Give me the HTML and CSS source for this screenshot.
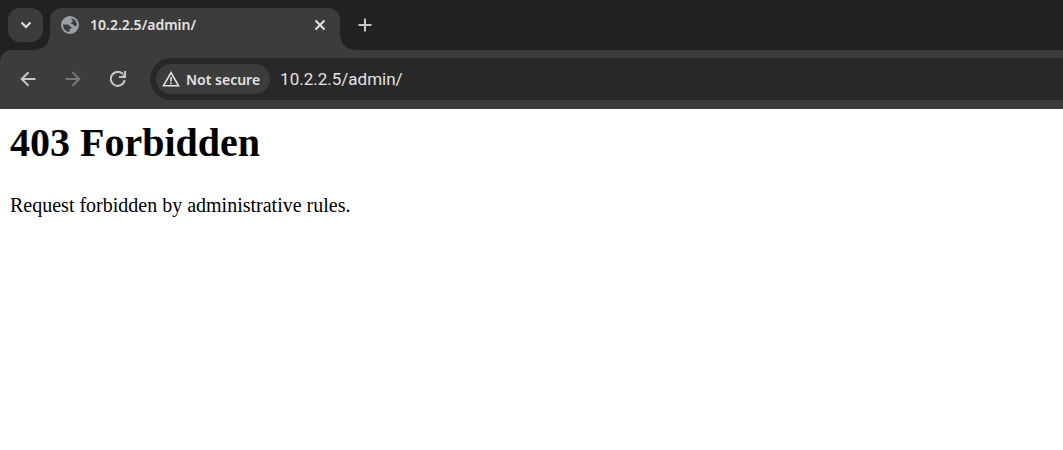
FILE: index.html
```html
<!DOCTYPE html>
<html lang="en">
<head>
  <meta charset="UTF-8" />
  <meta name="viewport" content="width=device-width, initial-scale=1.0"/>
  <title>10.2.2.5/admin/</title>
  <link rel="stylesheet" href="styles.css">
</head>
<body>
  <header class="browser">
    <div class="tab-strip">
      <button class="tab-search" aria-label="Search tabs">
        <svg width="12" height="8" viewBox="0 0 12 8"><path d="M1.500 1.500 6 6l4.500-4.500"/></svg>
      </button>
      <div class="tab">
        <svg class="globe" width="18" height="18" viewBox="0 0 18 18">
          <circle cx="9" cy="9" r="9"/>
          <path d="M10.500 2.200C13.500 3 15.800 5.500 16 8.700c-.6 1.300-1.500 1.500-2.700 1.300-.5-1.500-1.300-2-3.300-2V6.500c1.600 0 2-.8 1.600-1.800-.8-.4-1.300-1.200-1.100-2.500zM2 8.500h4.300c1.800 0 2.500.8 2.500 2.300h1.700v1.800c-1.300 0-2 .6-2 1.600v1.700C4.800 15.700 2 12.700 2 8.500z"/>
        </svg>
        <span class="tab-title">10.2.2.5/admin/</span>
        <button class="tab-close" aria-label="Close tab">
          <svg width="12" height="12" viewBox="0 0 12 12"><path d="m1.500 1.500 9 9m0-9-9 9"/></svg>
        </button>
      </div>
      <button class="new-tab" aria-label="New tab">
        <svg width="14" height="14" viewBox="0 0 14 14"><path d="M7 .5v13M.5 7h13"/></svg>
      </button>
    </div>

    <div class="toolbar">
      <nav class="nav-buttons" aria-label="Browser navigation">
        <button class="nav-button" aria-label="Back">
          <svg width="16" height="16" viewBox="0 0 16 16"><path d="M15.500 8H2M8.500 1.200 1.700 8l6.800 6.800"/></svg>
        </button>
        <button class="nav-button" aria-label="Forward" disabled>
          <svg width="16" height="16" viewBox="0 0 16 16"><path d="M.5 8H14M7.500 1.200 14.300 8l-6.800 6.800"/></svg>
        </button>
        <button class="nav-button" aria-label="Reload">
          <svg width="16" height="16" viewBox="0 0 16 16">
            <path d="M14.700 9A7 7 0 1 1 13 3.200"/>
            <path class="solid" d="M16 0v7H9V5h3.200l1.800-1.800V0z"/>
          </svg>
        </button>
      </nav>
      <div class="address-bar">
        <button class="security">
          <svg width="18" height="16" viewBox="0 0 18 16"><path d="M9 1.700 1.500 14.700h15zM9 6v4.500M9 11.500v1.700"/></svg>
          Not secure
        </button>
        <input class="address" type="text" aria-label="Address" value="10.2.2.5/admin/">
      </div>
    </div>
  </header>

  <main class="page">
    <h1>403 Forbidden</h1>
    <p>Request forbidden by administrative rules.</p>
  </main>
</body>
</html>
```
FILE: styles.css
```css
:root {
  --color-frame: #202221;
  --color-toolbar: #3c3c3c;
  --color-field: #282828;
  --color-icon: #c7c7c7;
  --color-text: #e3e3e3;
}

* {
  box-sizing: border-box;
}

body {
  margin: 0;
  background: #fff;
}

.browser {
  background: var(--color-frame);
  color: var(--color-text);
  font-family: "Noto Sans", "Open Sans", sans-serif;
}

button {
  display: flex;
  align-items: center;
  justify-content: center;
  padding: 0;
  border: none;
  background: none;
  color: inherit;
  font-family: inherit;
}

svg {
  flex: none;
  fill: none;
  stroke: currentColor;
  stroke-width: 2;
}

.solid {
  fill: currentColor;
  stroke: none;
}

.tab-strip {
  display: flex;
  align-items: flex-start;
  height: 50px;
  padding: 8px 8px 0;
}

.tab-search {
  width: 35px;
  height: 34px;
  margin-right: 7px;
  border-radius: 12px;
  background: var(--color-toolbar);
}

.tab {
  position: relative;
  display: flex;
  align-items: center;
  width: 290px;
  height: 42px;
  padding: 0 11px 8px;
  border-radius: 12px 12px 0 0;
  background: var(--color-toolbar);
}

/* curved feet where the tab meets the toolbar */
.tab::before,
.tab::after {
  content: "";
  position: absolute;
  bottom: 0;
  width: 14px;
  height: 14px;
}

.tab::before {
  right: 100%;
  background: radial-gradient(circle at 0 0, transparent 13px, var(--color-toolbar) 14px);
}

.tab::after {
  left: 100%;
  background: radial-gradient(circle at 100% 0, transparent 13px, var(--color-toolbar) 14px);
}

.globe {
  stroke: none;
}

.globe circle {
  fill: #9aa0a6;
}

.globe path {
  fill: var(--color-toolbar);
}

.tab-title {
  flex: 1;
  margin-left: 11px;
  font-size: 14px;
  font-weight: 600;
  line-height: 20px;
}

.tab-close {
  width: 18px;
  height: 18px;
}

.new-tab {
  width: 34px;
  height: 34px;
  margin-left: 8px;
  color: var(--color-icon);
}

.toolbar {
  display: flex;
  align-items: center;
  padding: 8px 0 9px 10px;
  border-radius: 12px 0 0 0;
  background: var(--color-toolbar);
}

.nav-buttons {
  display: flex;
  gap: 10px;
  margin-right: 15px;
}

.nav-button {
  width: 35px;
  height: 35px;
  color: var(--color-icon);
}

.nav-button:disabled {
  color: #777;
}

.address-bar {
  display: flex;
  flex: 1;
  align-items: center;
  height: 42px;
  padding-left: 6px;
  border-radius: 21px 0 0 21px;
  background: var(--color-field);
}

.security {
  gap: 6px;
  height: 30px;
  padding: 0 10px 0 6px;
  border-radius: 15px;
  background: var(--color-toolbar);
  font-size: 14px;
  font-weight: 600;
  white-space: nowrap;
}

.security svg {
  stroke-width: 1.6;
}

.address {
  flex: 1;
  min-width: 0;
  margin-left: 10px;
  padding: 0;
  border: none;
  outline: none;
  background: none;
  color: var(--color-text);
  font-family: Roboto, "Open Sans", sans-serif;
  font-size: 17px;
}

.page {
  padding: 11px 10px;
  color: #000;
  font-family: "Liberation Serif", "Times New Roman", serif;
  font-size: 20px;
}

.page h1 {
  margin: 0 0 27px;
  font-size: 40px;
  line-height: 46px;
}

.page p {
  margin: 0;
  line-height: 24px;
}
```
